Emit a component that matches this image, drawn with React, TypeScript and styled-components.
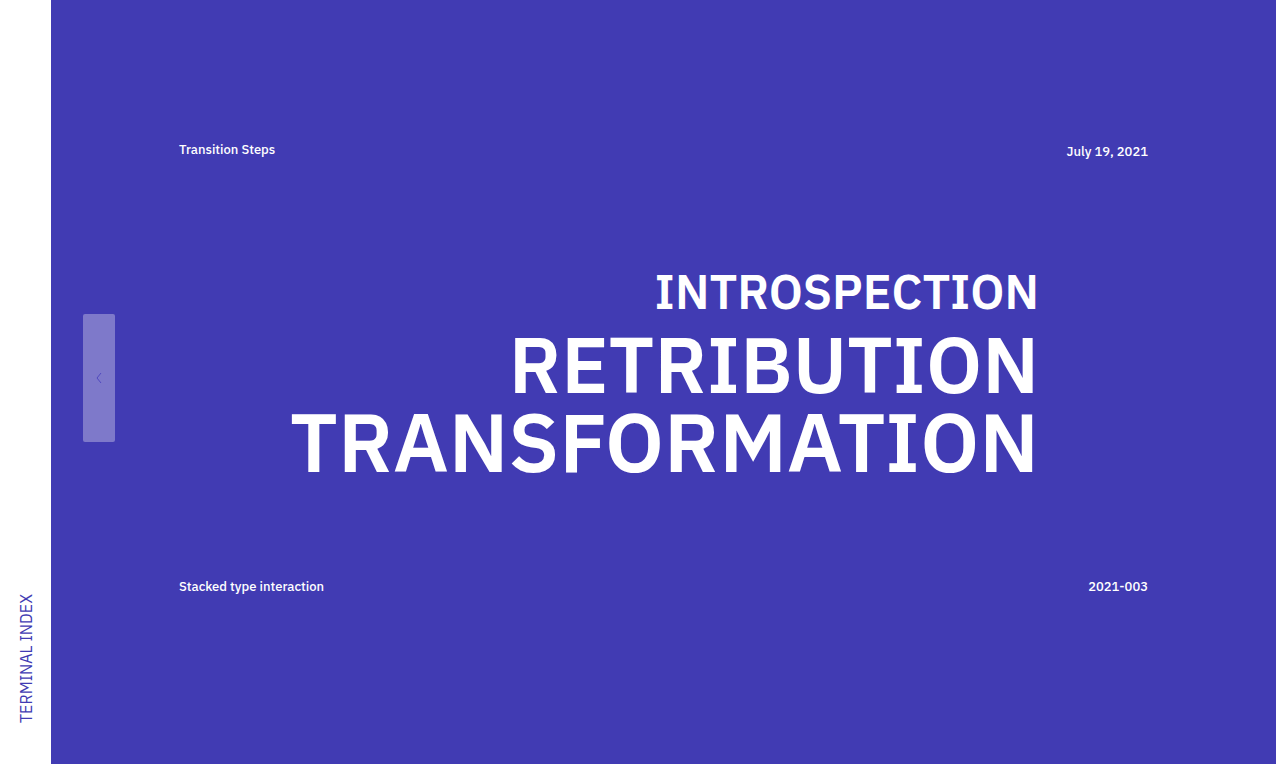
import React from "react";
import styled, { createGlobalStyle } from "styled-components";

const indigo = "#413bb3";

const GlobalStyle = createGlobalStyle`
  *, *::before, *::after { box-sizing: border-box; }
  body {
    margin: 0;
    background: ${indigo};
    color: #fff;
    font-family: "IBM Plex Sans", "Noto Sans", sans-serif;
  }
`;

const Page = styled.div`
  display: flex;
  min-height: 100vh;
`;

const Rail = styled.nav`
  display: flex;
  flex: none;
  align-items: flex-end;
  justify-content: center;
  width: 51px;
  padding-bottom: 41px;
  background: #fff;
`;

const RailLink = styled.a`
  color: ${indigo};
  font-size: 16px;
  line-height: 24px;
  text-decoration: none;
  writing-mode: vertical-rl;
  transform: rotate(180deg);
`;

const Stage = styled.main`
  display: flex;
  flex: 1;
  align-items: center;
  gap: 64px;
  padding: 0 128px 8px 32px;
`;

const PreviousButton = styled.button`
  display: flex;
  flex: none;
  align-items: center;
  justify-content: center;
  width: 32px;
  height: 128px;
  padding: 0;
  border: 0;
  border-radius: 2px;
  background: #7e79ca;
  color: #5049bf;
  cursor: pointer;
`;

const Slide = styled.article`
  display: flex;
  flex: 1;
  flex-direction: column;
  align-self: stretch;
  justify-content: space-between;
  padding: 140px 0 159px;
`;

const MetaRow = styled.div`
  display: flex;
  align-items: flex-start;
  justify-content: space-between;
  font-size: 13px;
  font-weight: 500;
  line-height: 20px;
`;

const IssueDate = styled.time`
  line-height: 24px;
`;

const Title = styled.h1`
  display: flex;
  flex-direction: column;
  align-items: flex-end;
  margin: 0;
  padding: 0 109px 6px 0;
  font-weight: 600;
`;

const TitleLine = styled.span<{ $size: number; $leading: number }>`
  font-size: ${({ $size }) => $size}px;
  line-height: ${({ $leading }) => $leading}px;
`;

const titleLines = [
  { text: "INTROSPECTION", size: 48, leading: 70 },
  { text: "RETRIBUTION", size: 79, leading: 76 },
  { text: "TRANSFORMATION", size: 83, leading: 78 },
];

export default function App() {
  return (
    <>
      <GlobalStyle />
      <Page>
        <Rail>
          <RailLink href="#index">TERMINAL INDEX</RailLink>
        </Rail>
        <Stage>
          <PreviousButton type="button" aria-label="Previous">
            <svg width="6" height="12" viewBox="0 0 6 12" fill="none" stroke="currentColor" aria-hidden="true">
              <path d="M5 1 1 6l4 5" />
            </svg>
          </PreviousButton>
          <Slide>
            <MetaRow>
              <span>Transition Steps</span>
              <IssueDate dateTime="2021-07-19">July 19, 2021</IssueDate>
            </MetaRow>
            <Title>
              {titleLines.map(({ text, size, leading }) => (
                <TitleLine key={text} $size={size} $leading={leading}>
                  {text}
                </TitleLine>
              ))}
            </Title>
            <MetaRow>
              <span>Stacked type interaction</span>
              <span>2021-003</span>
            </MetaRow>
          </Slide>
        </Stage>
      </Page>
    </>
  );
}
